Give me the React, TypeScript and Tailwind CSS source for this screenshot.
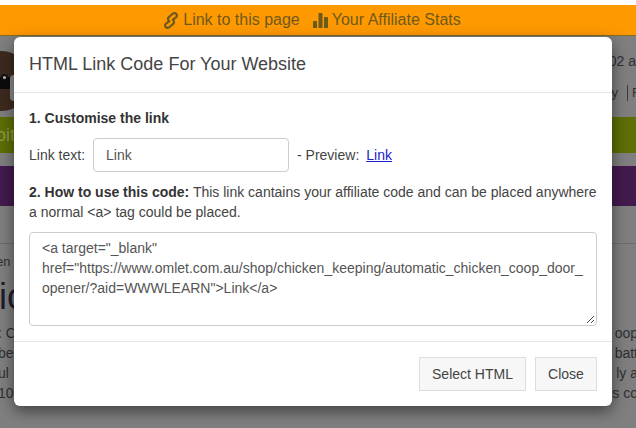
import React from "react";

const LinkIcon = () => (
  <svg width="16" height="17" viewBox="0 0 16 17" fill="none" stroke="#6f5a1e" strokeWidth="2.2" strokeLinecap="round" strokeLinejoin="round" className="mr-[4px]">
    <path d="M6.2 9.4 L3 11.6 C1.8 12.6 1.8 14.2 2.8 15.2 C3.8 16 5.4 16 6.6 15 L10.4 11.6 C11.4 10.6 11.2 9.2 10.2 8.4" />
    <path d="M9.8 7.6 L13 5.4 C14.2 4.4 14.2 2.8 13.2 1.8 C12.2 1 10.6 1 9.4 2 L5.6 5.4 C4.6 6.4 4.8 7.8 5.8 8.6" />
  </svg>
);

const StatsIcon = () => (
  <svg width="16" height="15" viewBox="0 0 16 15" fill="#6f5a1e" className="mr-[3px]">
    <rect x="0" y="8" width="4" height="7" rx="0.6" />
    <rect x="5.5" y="0" width="4" height="15" rx="0.6" />
    <rect x="11" y="4" width="4" height="11" rx="0.6" />
  </svg>
);

export default function App() {
  return (
    <div className="relative w-[636px] h-[428px] overflow-hidden bg-[#7f7f7f] font-['Liberation_Sans',Arial,sans-serif] text-[14px] text-[#444]">
      <div className="h-[5px] bg-white" />
      <div className="h-[31px] bg-[#ff9900] flex items-center justify-center text-[16px] text-[#6f5a1e] border-b border-[#8a6a20] pr-[12px]">
        <LinkIcon />
        <span>Link to this page</span>
        <span className="w-[13px]" />
        <StatsIcon />
        <span>Your Affiliate Stats</span>
      </div>

      <div className="h-[81px] relative">
        <div className="flex justify-end pt-[15px] text-[14px] text-[#2f2f36]">02 a</div>
        <div className="flex justify-end items-center mt-[11px] text-[13px] text-[#2f2f36]">
          <span className="mr-[9px]">y</span>
          <span className="w-px h-[16px] bg-[#3a3a3a] mr-[4px]" />
          <span className="mr-[-4px]">F</span>
        </div>
        <div className="absolute left-0 top-[15px] w-[14px] h-[66px] overflow-hidden">
          <div className="absolute left-[-22px] top-0 w-[48px] h-[60px] rounded-full bg-[#3d2a1e]" />
          <div className="absolute left-[-8px] top-[26px] w-[24px] h-[12px] rounded-full bg-[#0c0c0c]" />
          <div className="absolute left-[1px] top-[23px] w-[7px] h-[7px] rounded-full bg-[#bdbdbd] border-2 border-[#111]" />
          <div className="absolute left-[10px] top-[24px] w-[8px] h-[26px] rounded-full bg-[#8c8c8c]" />
        </div>
      </div>
      <div className="h-[36px] bg-[#5d6f05] flex items-center text-[18px] text-[#8d9a47]"><span className="ml-[-4px]">oit</span></div>
      <div className="h-[13px]" />
      <div className="h-[40px] bg-[#431a4e]" />
      <div className="h-[38px] border-b border-[#6d6d6d]" />
      <div className="pt-[9px] text-[13px] text-[#2f2f33] leading-[18px] ml-[-4px]">en</div>
      <div className="flex justify-between h-[46px] mt-[6px]">
        <span className="text-[36px] leading-[40px] text-[#1d1d2b] ml-[-1px]">ic</span>
      </div>
      {[
        [": C", "oop"],
        ["be", "batt"],
        ["ul", "ly a"],
        ["10", "s co"],
      ].map(([l, r]) => (
        <div key={l} className="flex justify-between h-[20px] leading-[20px] text-[#2f2f33] overflow-hidden">
          <span className="ml-[-2px]">{l}</span>
          <span className="mr-[-2px]">{r}</span>
        </div>
      ))}

      {/* Modal overlay */}
      <div className="absolute left-[14px] top-[37px] w-[598px] h-[369px] bg-white rounded-[6px] shadow-[0_5px_15px_rgba(0,0,0,0.5)] flex flex-col">
        <div className="h-[56px] border-b border-[#e5e5e5] flex items-center px-[15px] text-[18px] text-[#444]">
          HTML Link Code For Your Website
        </div>
        <div className="flex-1 px-[15px] pt-[15px]">
          <div className="font-bold leading-[20px] text-[#333]">1. Customise the link</div>
          <div className="flex items-center mt-[10px] h-[34px]">
            <span>Link text:</span>
            <div className="ml-[8px] w-[196px] h-[34px] border border-[#ccc] rounded-[4px] pl-[12px] flex items-center text-[#555]">Link</div>
            <span className="ml-[8px]">- Preview:</span>
            <a className="ml-[7px] text-[#2222cc] underline">Link</a>
          </div>
          <div className="mt-[10px] leading-[20px]">
            <b className="text-[#333]">2. How to use this code:</b> This link cantains your affiliate code and can be placed anywhere a normal &lt;a&gt; tag could be placed.
          </div>
          <div className="relative mt-[10px] h-[94px] border border-[#ccc] rounded-[4px] px-[12px] pt-[5px] text-[#555] leading-[20px] break-all">
            <div>&lt;a target="_blank"</div>
            <div>href="https://www.omlet.com.au/shop/chicken_keeping/automatic_chicken_coop_door_</div>
            <div>opener/?aid=WWWLEARN"&gt;Link&lt;/a&gt;</div>
            <svg width="9" height="9" viewBox="0 0 9 9" className="absolute right-[1px] bottom-[1px]" stroke="#555" strokeWidth="1">
              <path d="M1 8 L8 1 M5 8 L8 5" />
            </svg>
          </div>
        </div>
        <div className="h-[65px] border-t border-[#e5e5e5] flex items-start justify-end gap-[9px] px-[15px] pt-[15px]">
          <button className="w-[107px] h-[34px] bg-[#f7f7f7] border border-[#ddd] text-[#444]">Select HTML</button>
          <button className="w-[62px] h-[34px] bg-[#f7f7f7] border border-[#ddd] text-[#444]">Close</button>
        </div>
      </div>
    </div>
  );
}
